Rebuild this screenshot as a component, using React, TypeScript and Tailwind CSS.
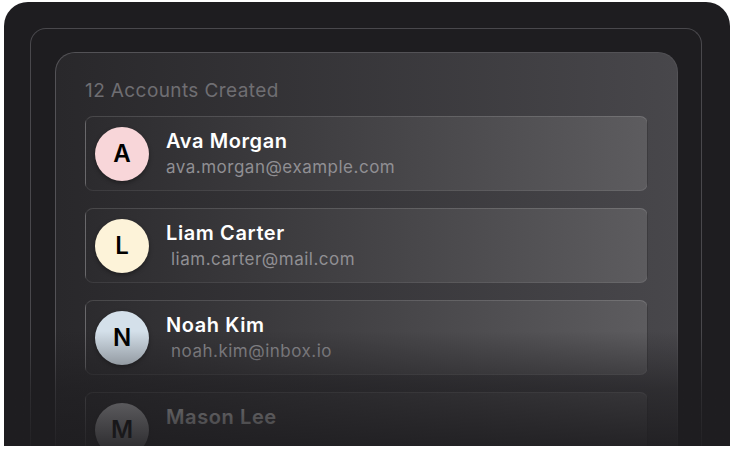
import React from "react";

const people = [
  { initial: "A", name: "Ava Morgan", email: "ava.morgan@example.com", bg: "bg-[#f8d6d9]", indent: false },
  { initial: "L", name: "Liam Carter", email: "liam.carter@mail.com", bg: "bg-[#fdf3d9]", indent: true },
  { initial: "N", name: "Noah Kim", email: "noah.kim@inbox.io", bg: "bg-[#d4e0ea]", indent: true },
  { initial: "M", name: "Mason Lee", email: "", bg: "bg-[#d9d9dc]", indent: true },
];

export default function App() {
  return (
    <div className="w-[734px] h-[452px] bg-white pt-[2px] pl-[4px] overflow-hidden" style={{ fontFamily: "Inter, 'Noto Sans', sans-serif" }}>
      <div className="relative w-[726px] h-[444px] rounded-t-[24px] bg-[#1e1d20] overflow-hidden pt-[26px] pl-[26px]">
        <div className="w-[672px] h-[440px] rounded-t-[16px] border border-b-0 border-[#49484c] pt-[23px] pl-[24px]">
          <div className="w-[623px] h-[420px] rounded-t-[20px] border border-b-0 border-[#535256] bg-gradient-to-r from-[#29282b] to-[#48474b] pt-[24px] pl-[29px]">
            <div className="text-[19px] leading-[28px] text-[#6f6e72] tracking-[0.4px]">12 Accounts Created</div>
            <div className="mt-[11px] flex flex-col gap-[17px]">
              {people.map((p) => (
                <div
                  key={p.name}
                  className="w-[563px] h-[75px] rounded-[8px] border border-[#ffffff14] border-t-[#ffffff22] bg-gradient-to-r from-[#2c2b2e] to-[#5d5c5f] flex items-center pl-[9px] gap-[17px]"
                >
                  <div className={`w-[54px] h-[54px] shrink-0 rounded-full ${p.bg} flex items-center justify-center text-[24px] font-semibold text-black shadow-[0_2px_4px_rgba(0,0,0,0.35)]`}>
                    {p.initial}
                  </div>
                  <div className="flex flex-col">
                    <div className="text-[20px] leading-[26px] font-semibold text-white tracking-[0.6px]">{p.name}</div>
                    {p.email ? (
                      <div className={`text-[17px] leading-[24px] text-[#908f93] mt-[1px] tracking-[0.5px] ${p.indent ? "pl-[5px]" : ""}`}>{p.email}</div>
                    ) : (
                      <div className="h-[25px]" />
                    )}
                  </div>
                </div>
              ))}
            </div>
          </div>
        </div>
        <div className="absolute left-0 right-0 bottom-0 h-[115px] bg-gradient-to-b from-[#1e1d2000] via-[#1e1d2099] to-[#1e1d20e6] pointer-events-none" />
      </div>
    </div>
  );
}
